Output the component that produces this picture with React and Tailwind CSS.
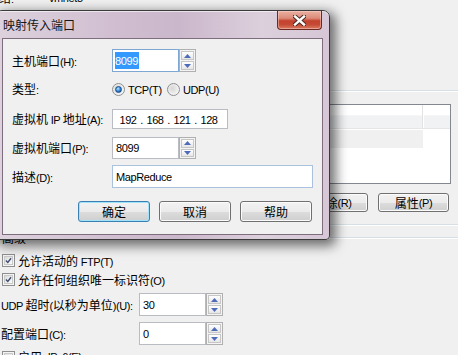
import React from "react";

const CJKRE = /[\u2E80-\u9FFF\u3000-\u303F\uFF00-\uFFEF]/;
function T({ s }) {
  const parts =
    s.match(/[\u2E80-\u9FFF\u3000-\u303F\uFF00-\uFFEF]+|[^\u2E80-\u9FFF\u3000-\u303F\uFF00-\uFFEF]+/g) || [];
  return (
    <>
      {parts.map((p, i) =>
        CJKRE.test(p) ? (
          <span key={i} className="font-['Noto_Sans_CJK_SC',sans-serif] text-[12px]">
            {p}
          </span>
        ) : (
          <span key={i} className="font-['Liberation_Sans',sans-serif] text-[11px] tracking-[-0.4px] whitespace-pre">
            {p}
          </span>
        )
      )}
    </>
  );
}

function Tri({ down }) {
  return (
    <svg width="7" height="4" viewBox="0 0 7 4">
      {down ? <path d="M0 0 H7 L3.5 4 Z" fill="#4d6bb8" /> : <path d="M0 4 H7 L3.5 0 Z" fill="#4d6bb8" />}
    </svg>
  );
}

function Spinner() {
  return (
    <div className="flex flex-col w-[17px] h-full border border-[#b0b0b0] bg-[#f4f4f4] p-px gap-px">
      <div className="flex-1 flex items-center justify-center border border-[#c6c6c6] bg-[linear-gradient(#ffffff,#e6e6e6)]">
        <Tri />
      </div>
      <div className="flex-1 flex items-center justify-center border border-[#c6c6c6] bg-[linear-gradient(#ffffff,#e6e6e6)]">
        <Tri down />
      </div>
    </div>
  );
}

function Btn({ children, def, className }) {
  return (
    <div
      className={
        (def
          ? "border-[#3c7fb1] shadow-[inset_0_0_0_1px_#9fe2fb] "
          : "border-[#707070] shadow-[inset_0_0_0_1px_#fbfbfb] ") +
        "flex items-center justify-center rounded-[3px] border bg-[linear-gradient(#f2f2f2_0%,#ebebeb_50%,#dddddd_51%,#cfcfcf_100%)] leading-[14px] " +
        className
      }
    >
      {children}
    </div>
  );
}

function Check({ checked }) {
  return (
    <div className="w-[13px] h-[13px] border border-[#8e8f8f] bg-[#f4f4f4] p-px shrink-0">
      <div className="w-full h-full border border-[#c9c9c9] bg-[linear-gradient(135deg,#dcdcdc,#fbfbfb)] flex items-center justify-center">
        {checked && (
          <svg width="9" height="9" viewBox="0 0 9 9">
            <path d="M1.2 4.6 L3.6 7 L7.8 1.6" fill="none" stroke="#3b4a6e" strokeWidth="1.7" />
          </svg>
        )}
      </div>
    </div>
  );
}

function Radio({ checked }) {
  return (
    <div className="w-[13px] h-[13px] rounded-full border border-[#8e8f8f] bg-[radial-gradient(circle_at_40%_40%,#d6d6d6,#f6f6f6_75%)] flex items-center justify-center shrink-0">
      {checked && (
        <div className="w-[7px] h-[7px] rounded-full border border-[#1d4f8e] bg-[radial-gradient(circle_at_40%_35%,#b5e6fc,#2f7fd0_55%,#0e3d7a)]" />
      )}
    </div>
  );
}

function CloseX() {
  return (
    <svg width="13" height="11" viewBox="0 0 13 11">
      <path d="M2 1.5 L11 9.5 M11 1.5 L2 9.5" stroke="#4b2a26" strokeWidth="4.4" strokeLinecap="square" />
      <path d="M2 1.5 L11 9.5 M11 1.5 L2 9.5" stroke="#ffffff" strokeWidth="2.4" strokeLinecap="square" />
    </svg>
  );
}

export default function App() {
  return (
    <div className="relative w-[458px] h-[355px] overflow-hidden bg-[#f0f0f0] text-black leading-[14px]">
      {/* underlying dialog */}
      <div className="flex flex-col">
        <div className="flex h-[14px] mt-[-9px] items-center">
          <span className="ml-[-13px] w-[62px]">
            <T s="网络:" />
          </span>
          <T s="vmnet8" />
        </div>
        {/* port forwarding group */}
        <div className="mt-[85px] border-t border-t-[#d5dfe5] border-b border-b-[#d5dfe5] shadow-[inset_0_1px_0_#ffffff,0_1px_0_#ffffff] flex flex-col">
          <div className="mt-[13px] ml-[8px] w-[443px] h-[80px] border border-[#828790] bg-white flex flex-col">
            <div className="flex h-[24px] bg-[linear-gradient(#ffffff_0%,#ffffff_45%,#f1f2f4_46%,#f1f2f4_100%)] border-b border-[#e5e5e5]">
              <div className="w-[414px] border-r border-r-[#e2e2e2]" />
              <div className="w-px bg-white" />
            </div>
            <div className="mt-px w-[414px] h-[18px] bg-[#f0f0f0]" />
          </div>
          <div className="mt-[9px] mb-[12px] flex justify-end gap-[10px] pr-[9px]">
            <Btn className="w-[71px] h-[19px]">
              <T s="添加(A)..." />
            </Btn>
            <Btn className="w-[71px] h-[19px]">
              <T s="移除(R)" />
            </Btn>
            <Btn className="w-[71px] h-[19px]">
              <T s="属性(P)" />
            </Btn>
          </div>
        </div>
        <div className="mt-[6px] h-[14px] flex items-center pl-[2px]">
          <T s="高级" />
          <div className="ml-[4px] flex-1 h-[2px] border-t border-t-[#d5dfe5] border-b border-b-white" />
        </div>
        <div className="mt-[7px] h-[16px] flex items-center pl-[2px] gap-[3px]">
          <Check checked />
          <span className="mt-px">
            <T s="允许活动的 FTP(T)" />
          </span>
        </div>
        <div className="mt-[3px] h-[16px] flex items-center pl-[2px] gap-[3px]">
          <Check checked />
          <span className="mt-px">
            <T s="允许任何组织唯一标识符(O)" />
          </span>
        </div>
        <div className="mt-[6px] h-[23px] flex items-center pl-[1px]">
          <span className="w-[138px]">
            <T s="UDP 超时(以秒为单位)(U):" />
          </span>
          <div className="w-[67px] h-full border border-[#b9bcc3] bg-white flex items-center pl-[3px]">
            <T s="30" />
          </div>
          <Spinner />
        </div>
        <div className="mt-[6px] h-[23px] flex items-center pl-[1px]">
          <span className="w-[138px]">
            <T s="配置端口(C):" />
          </span>
          <div className="w-[67px] h-full border border-[#b9bcc3] bg-white flex items-center pl-[3px]">
            <T s="0" />
          </div>
          <Spinner />
        </div>
        <div className="mt-[4px] h-[16px] flex items-center pl-[2px] gap-[3px]">
          <Check />
          <T s="启用 IPv6(E)" />
        </div>
      </div>

      {/* overlay dialog window */}
      <div className="absolute left-[-5px] top-[10px] w-[335px] h-[230px] flex flex-col rounded-t-[7px] rounded-b-[4px] border border-[#3a3a3a] bg-[linear-gradient(90deg,#ddd2dd_0%,#cfbccf_40%,#cbb7cb_55%,#dcd0dc_80%,#d6c6d6_100%)] shadow-[4px_4px_12px_2px_rgba(0,0,0,0.55)]">
        <div className="h-[27px] flex shrink-0 rounded-t-[6px] shadow-[inset_0_1px_0_rgba(255,255,255,0.6)]">
          <div className="pl-[7px] pt-[6px] text-[#161616]">
            <T s="映射传入端口" />
          </div>
          <div className="ml-auto mr-[7px] w-[45px] h-[19px] rounded-b-[4px] border border-t-0 border-[#6a2a22] bg-[linear-gradient(#eab0a2_0%,#dc8b78_40%,#c4412d_55%,#c54a34_75%,#da7a62_100%)] shadow-[inset_0_0_0_1px_rgba(255,220,210,0.45)] flex items-center justify-center">
            <CloseX />
          </div>
        </div>
        <div className="flex-1 mx-[6px] mb-[4px] border border-[#7d6d7d] bg-[#f0f0f0] flex flex-col pl-[9px] pt-[10px]">
          {/* row 1 */}
          <div className="h-[23px] flex items-center">
            <span className="w-[100px]">
              <T s="主机端口(H):" />
            </span>
            <div className="w-[67px] h-full border border-[#7ea7d3] bg-white flex items-center pl-[2px]">
              <span className="bg-[#3399ff] text-white h-[17px] flex items-center pr-px">
                <T s="8099" />
              </span>
            </div>
            <Spinner />
          </div>
          {/* row 2 */}
          <div className="mt-[7px] h-[20px] flex items-center">
            <span className="w-[100px]">
              <T s="类型:" />
            </span>
            <Radio checked />
            <span className="ml-[3px] w-[39px]">
              <T s="TCP(T)" />
            </span>
            <Radio />
            <span className="ml-[3px]">
              <T s="UDP(U)" />
            </span>
          </div>
          {/* row 3 */}
          <div className="mt-[10px] h-[20px] flex items-center">
            <span className="w-[100px]">
              <T s="虚拟机 IP 地址(A):" />
            </span>
            <div className="w-[116px] h-full border border-[#b9bcc3] bg-white flex items-center pl-[6px]">
              <span className="w-[18px] text-center"><T s="192" /></span>
              <span className="w-[9px] text-center"><T s="." /></span>
              <span className="w-[18px] text-center"><T s="168" /></span>
              <span className="w-[9px] text-center"><T s="." /></span>
              <span className="w-[18px] text-center"><T s="121" /></span>
              <span className="w-[9px] text-center"><T s="." /></span>
              <span className="w-[18px] text-center"><T s="128" /></span>
            </div>
          </div>
          {/* row 4 */}
          <div className="mt-[8px] h-[22px] flex items-center">
            <span className="w-[100px]">
              <T s="虚拟机端口(P):" />
            </span>
            <div className="w-[67px] h-full border border-[#b9bcc3] bg-white flex items-center pl-[3px]">
              <T s="8099" />
            </div>
            <Spinner />
          </div>
          {/* row 5 */}
          <div className="mt-[6px] h-[23px] flex items-center">
            <span className="w-[100px]">
              <T s="描述(D):" />
            </span>
            <div className="w-[201px] h-full border border-[#a9c3df] bg-white flex items-center pl-[3px]">
              <T s="MapReduce" />
            </div>
          </div>
          {/* buttons */}
          <div className="mt-[13px] flex gap-[9px] pl-[66px]">
            <Btn def className="w-[72px] h-[21px]">
              <T s="确定" />
            </Btn>
            <Btn className="w-[72px] h-[21px]">
              <T s="取消" />
            </Btn>
            <Btn className="w-[72px] h-[21px]">
              <T s="帮助" />
            </Btn>
          </div>
        </div>
      </div>
    </div>
  );
}
